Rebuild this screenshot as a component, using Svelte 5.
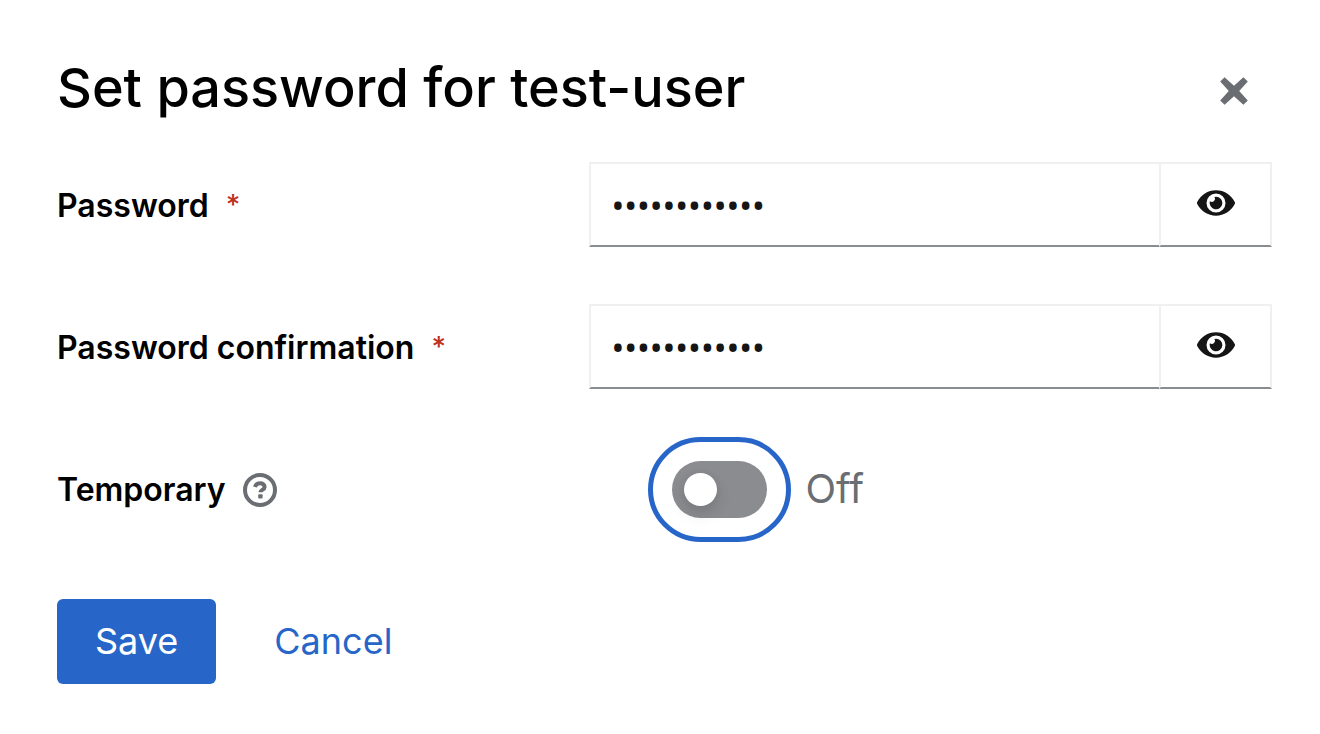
<script>
  let password = $state('testpassword');
  let confirmation = $state('testpassword');
  let showPassword = $state(false);
  let showConfirmation = $state(false);
  let temporary = $state(false);
</script>

{#snippet eye()}
  <svg class="eye" viewBox="0 0 576 512" aria-hidden="true">
    <path d="M572.52 241.4C518.29 135.59 410.93 64 288 64S57.68 135.64 3.48 241.41a32.35 32.35 0 0 0 0 29.19C57.71 376.41 165.07 448 288 448s230.32-71.64 284.52-177.41a32.35 32.35 0 0 0 0-29.19zM288 400a144 144 0 1 1 144-144 143.93 143.93 0 0 1-144 144zm0-240a95.31 95.31 0 0 0-25.31 3.79 47.85 47.85 0 0 1-66.9 66.9A95.78 95.78 0 1 0 288 160z" />
  </svg>
{/snippet}

<main class="dialog" aria-labelledby="title">
  <header>
    <h1 id="title">Set password for test-user</h1>
    <button class="close" type="button" aria-label="Close">
      <svg viewBox="0 0 28 28" aria-hidden="true">
        <path d="M4.6 .2 14 8.8 23.4 .2 27.8 4.6 19.2 14 27.8 23.4 23.4 27.8 14 19.2 4.6 27.8 .2 23.4 8.8 14 .2 4.6z" />
      </svg>
    </button>
  </header>

  <form onsubmit={(event) => event.preventDefault()}>
    <div class="row">
      <div class="label">
        <label for="password">Password</label>
        <span class="required" aria-hidden="true">*</span>
      </div>
      <div class="group">
        <input id="password" type={showPassword ? 'text' : 'password'} bind:value={password} required />
        <button type="button" aria-label="Show password" onclick={() => (showPassword = !showPassword)}>
          {@render eye()}
        </button>
      </div>
    </div>

    <div class="row">
      <div class="label">
        <label for="confirmation">Password confirmation</label>
        <span class="required" aria-hidden="true">*</span>
      </div>
      <div class="group">
        <input id="confirmation" type={showConfirmation ? 'text' : 'password'} bind:value={confirmation} required />
        <button type="button" aria-label="Show password confirmation" onclick={() => (showConfirmation = !showConfirmation)}>
          {@render eye()}
        </button>
      </div>
    </div>

    <div class="row">
      <div class="label">
        <label for="temporary">Temporary</label>
        <button class="help" type="button" aria-label="Help for temporary">
          <svg viewBox="0 0 34 34" aria-hidden="true">
            <circle cx="17" cy="17" r="15" fill="none" stroke="currentColor" stroke-width="4" />
            <path d="M12 14C12.6 11.4 14.6 10.2 17.1 10.2c2.7 0 4.5 1.5 4.5 3.7 0 3-4.2 3-4.2 5.4" fill="none" stroke="currentColor" stroke-width="4" />
            <rect x="15.2" y="21.2" width="4.4" height="4.2" rx="1" fill="currentColor" />
          </svg>
        </button>
      </div>
      <div class="switch">
        <input id="temporary" type="checkbox" role="switch" bind:checked={temporary} />
        <span class="state">{temporary ? 'On' : 'Off'}</span>
      </div>
    </div>

    <footer>
      <button class="save" type="submit">Save</button>
      <button class="cancel" type="button">Cancel</button>
    </footer>
  </form>
</main>

<style>
  :global(body) {
    margin: 0;
    background: #fff;
  }

  .dialog {
    box-sizing: border-box;
    padding: 52px 48px 50px 57px;
    font-family: Inter, "Liberation Sans", sans-serif;
    color: #000;
  }

  button {
    margin: 0;
    padding: 0;
    border: 0;
    background: none;
    font-family: inherit;
    cursor: pointer;
  }

  svg {
    display: block;
    fill: currentColor;
  }

  header {
    display: flex;
    align-items: center;
    justify-content: space-between;
    padding-right: 24px;
    margin-bottom: 38px;
  }

  h1 {
    margin: 0;
    font-size: 54px;
    line-height: 72px;
    font-weight: 500;
  }

  .close {
    color: #6a6e73;
    padding-top: 6px;
  }

  .close svg {
    width: 28px;
    height: 28px;
  }

  form {
    display: grid;
    gap: 57px;
  }

  .row {
    display: grid;
    grid-template-columns: 39fr 50fr;
    align-items: center;
    height: 85px;
  }

  .label {
    display: flex;
    align-items: center;
    gap: 17px;
    padding-top: 3px;
    font-size: 32px;
    line-height: 48px;
    font-weight: 600;
  }

  .required {
    padding-bottom: 2px;
    color: #be3020;
    font-size: 28px;
    line-height: 40px;
    font-weight: 500;
  }

  .help {
    color: #6a6e73;
  }

  .help svg {
    width: 34px;
    height: 34px;
  }

  .group {
    display: flex;
  }

  .group input,
  .group button {
    box-sizing: border-box;
    height: 85px;
    border: 2px solid #f0f0f0;
    border-bottom-color: #8a8d90;
    border-radius: 0;
    background: #fff;
    color: #151515;
  }

  .group input {
    flex: 1;
    min-width: 0;
    padding: 0 20px;
    border-right: 0;
    font: 34px "Noto Sans", sans-serif;
    outline: none;
  }

  .group button {
    display: flex;
    align-items: center;
    justify-content: center;
    width: 113px;
    padding-bottom: 3px;
  }

  .eye {
    width: 38px;
    height: 34px;
  }

  .switch {
    display: flex;
    align-items: center;
    gap: 38px;
    padding: 1px 0 0 83px;
  }

  .switch input {
    appearance: none;
    box-sizing: border-box;
    display: flex;
    align-items: center;
    width: 95px;
    height: 57px;
    margin: 0;
    padding: 0 12px;
    border-radius: 29px;
    background: #8b8c90;
    outline: 5px solid #2766c8;
    outline-offset: 19px;
  }

  .switch input::before {
    content: "";
    width: 33px;
    height: 33px;
    border-radius: 50%;
    background: #fff;
    box-shadow: 0 8px 16px rgba(3, 3, 3, 0.12), 0 0 8px rgba(3, 3, 3, 0.06);
  }

  .switch input:checked {
    justify-content: flex-end;
    background: #2766c8;
  }

  .state {
    color: #6a6e73;
    font-size: 40px;
    line-height: 56px;
  }

  footer {
    display: flex;
    gap: 20px;
    padding-top: 11px;
  }

  footer button {
    padding: 0 38px;
    border-radius: 6px;
    font-size: 36px;
    line-height: 85px;
  }

  .save {
    background: #2766c8;
    color: #fff;
  }

  .cancel {
    color: #2766c8;
  }
</style>
